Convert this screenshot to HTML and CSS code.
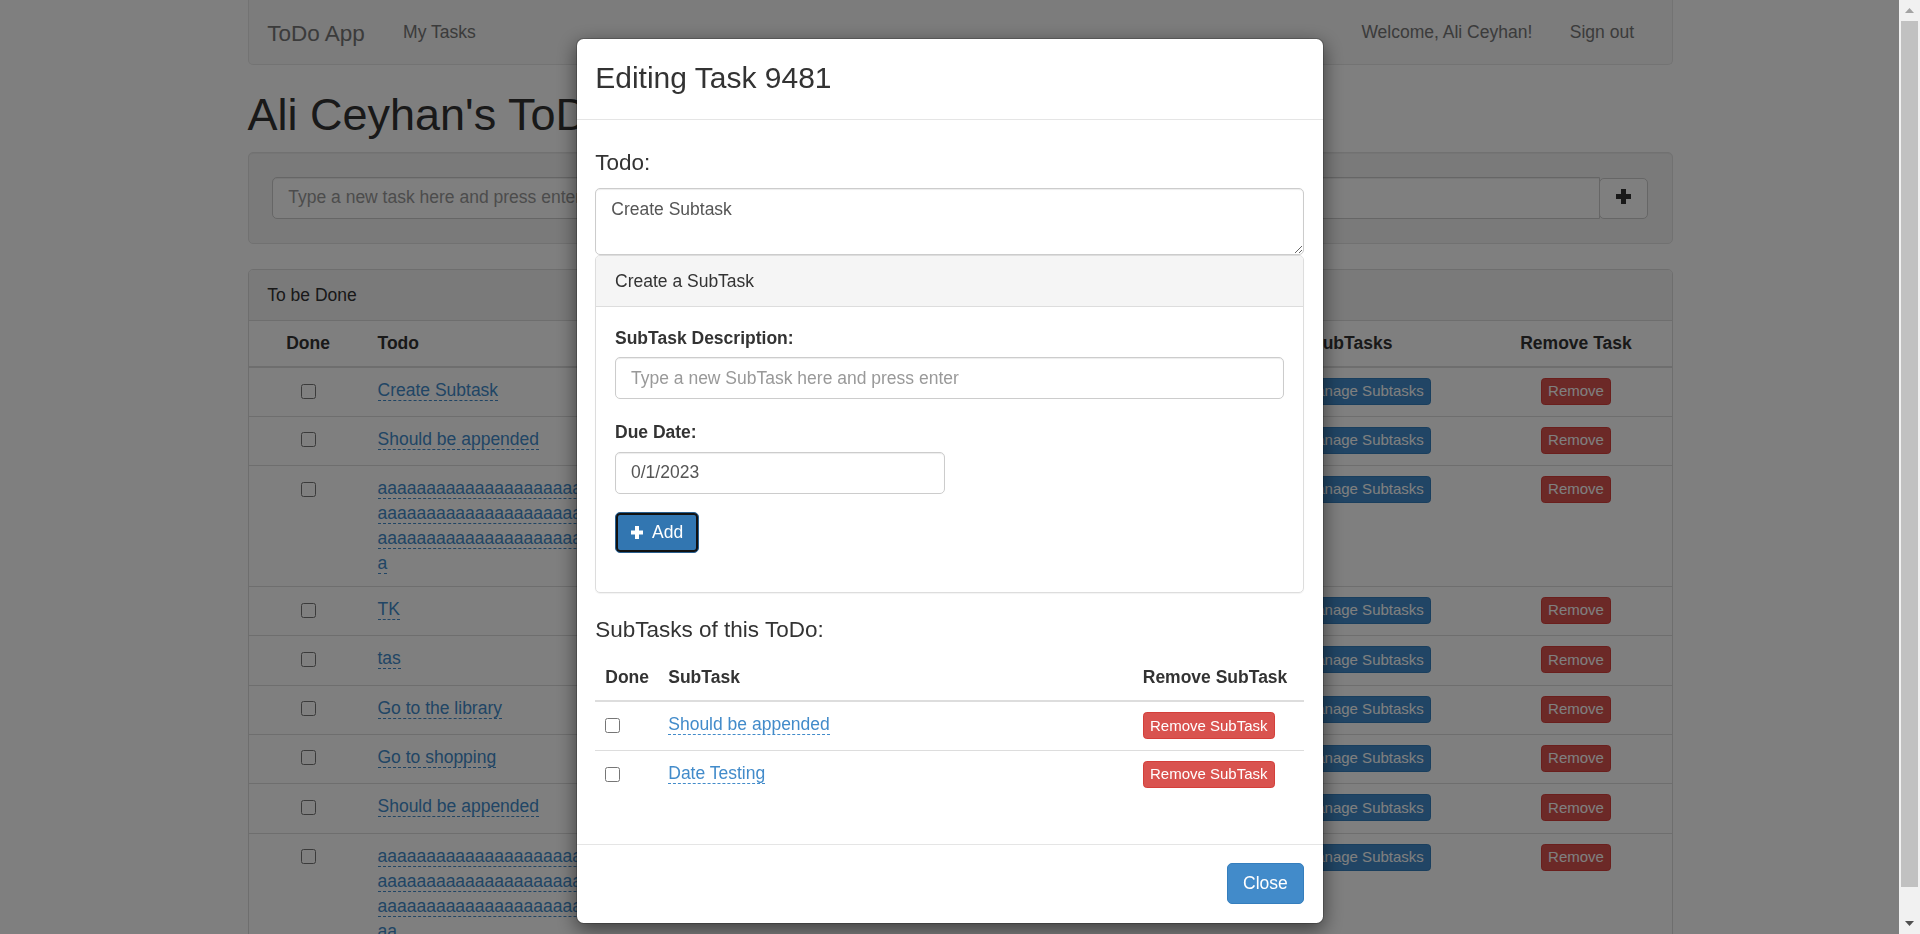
FILE: index.html
```html
<!DOCTYPE html>
<html lang="en">
<head>
<meta charset="utf-8">
<title>ToDo App</title>
<link rel="stylesheet" href="styles.css">
</head>
<body>
<div class="page">
  <nav class="navbar">
    <a class="navbar-brand">ToDo App</a>
    <ul class="nav">
      <li><a>My Tasks</a></li>
    </ul>
    <ul class="nav nav-right">
      <li><a>Welcome, Ali Ceyhan!</a></li>
      <li><a>Sign out</a></li>
    </ul>
  </nav>

  <h1 class="page-title">Ali Ceyhan's ToDo List</h1>

  <div class="well">
    <div class="input-group">
      <input class="form-control" type="text" placeholder="Type a new task here and press enter">
      <button class="btn btn-default btn-newtask" type="button">
        <svg class="icon-plus-lg" width="15" height="15" viewBox="0 0 15 15"><path d="M5 0h5v5h5v5h-5v5H5v-5H0V5h5z" fill="#333"/></svg>
      </button>
    </div>
  </div>

  <div class="panel">
    <div class="panel-heading">To be Done</div>
    <table class="task-table">
      <colgroup>
        <col class="col-done"><col class="col-todo"><col><col class="col-sub"><col class="col-remove">
      </colgroup>
      <thead>
        <tr><th class="center">Done</th><th>Todo</th><th>Due Date</th><th class="th-sub">SubTasks</th><th class="center">Remove Task</th></tr>
      </thead>
      <tbody>
        <tr><td class="center"><input type="checkbox" class="chk"></td><td><a class="editable">Create Subtask</a></td><td></td><td><button class="btn btn-xs btn-primary">Manage Subtasks</button></td><td class="center"><button class="btn btn-xs btn-danger">Remove</button></td></tr>
        <tr><td class="center"><input type="checkbox" class="chk"></td><td><a class="editable">Should be appended</a></td><td></td><td><button class="btn btn-xs btn-primary">Manage Subtasks</button></td><td class="center"><button class="btn btn-xs btn-danger">Remove</button></td></tr>
        <tr><td class="center"><input type="checkbox" class="chk"></td><td class="wrap"><a class="editable">aaaaaaaaaaaaaaaaaaaaaaaaaaaaaaaaaaaaaaaaaaaaaaaaaaaaaaaaaaaaaaaaaaaaaaaaaaaaaaaaaaaaaaaaaaaaaaaaaaaaaaaaaaaaaaaaaaaaaaaaa</a></td><td></td><td><button class="btn btn-xs btn-primary">Manage Subtasks</button></td><td class="center"><button class="btn btn-xs btn-danger">Remove</button></td></tr>
        <tr><td class="center"><input type="checkbox" class="chk"></td><td><a class="editable">TK</a></td><td></td><td><button class="btn btn-xs btn-primary">Manage Subtasks</button></td><td class="center"><button class="btn btn-xs btn-danger">Remove</button></td></tr>
        <tr><td class="center"><input type="checkbox" class="chk"></td><td><a class="editable">tas</a></td><td></td><td><button class="btn btn-xs btn-primary">Manage Subtasks</button></td><td class="center"><button class="btn btn-xs btn-danger">Remove</button></td></tr>
        <tr><td class="center"><input type="checkbox" class="chk"></td><td><a class="editable">Go to the library</a></td><td></td><td><button class="btn btn-xs btn-primary">Manage Subtasks</button></td><td class="center"><button class="btn btn-xs btn-danger">Remove</button></td></tr>
        <tr><td class="center"><input type="checkbox" class="chk"></td><td><a class="editable">Go to shopping</a></td><td></td><td><button class="btn btn-xs btn-primary">Manage Subtasks</button></td><td class="center"><button class="btn btn-xs btn-danger">Remove</button></td></tr>
        <tr><td class="center"><input type="checkbox" class="chk"></td><td><a class="editable">Should be appended</a></td><td></td><td><button class="btn btn-xs btn-primary">Manage Subtasks</button></td><td class="center"><button class="btn btn-xs btn-danger">Remove</button></td></tr>
        <tr><td class="center"><input type="checkbox" class="chk"></td><td class="wrap"><a class="editable">aaaaaaaaaaaaaaaaaaaaaaaaaaaaaaaaaaaaaaaaaaaaaaaaaaaaaaaaaaaaaaaaaaaaaaaaaaaaaaaaaaaaaaaaaaaaaaaaaaaaaaaaaaaaaaaaaaaaaaaaaa</a></td><td></td><td><button class="btn btn-xs btn-primary">Manage Subtasks</button></td><td class="center"><button class="btn btn-xs btn-danger">Remove</button></td></tr>
      </tbody>
    </table>
  </div>
</div>

<div class="backdrop"></div>

<div class="modal-layer">
  <div class="modal-area">
    <div class="modal-dialog">
      <div class="modal-content">
        <div class="modal-header">
          <h3 class="modal-title">Editing Task 9481</h3>
        </div>
        <div class="modal-body">
          <h4 class="section-title">Todo:</h4>
          <textarea class="form-control todo-text" rows="2">Create Subtask</textarea>
          <div class="sub-panel">
            <div class="sub-panel-heading">Create a SubTask</div>
            <div class="sub-panel-body">
              <div class="form-group form-group-first">
                <label class="field-label">SubTask Description:</label>
                <input class="form-control" type="text" placeholder="Type a new SubTask here and press enter">
              </div>
              <div class="form-group">
                <label class="field-label">Due Date:</label>
                <input class="form-control date-input" type="text" value="0/1/2023">
              </div>
              <div class="form-group">
                <button class="btn btn-add" type="button"><svg class="icon-plus" width="12" height="13" viewBox="0 0 12 13"><path d="M4 0h4v4.5h4v4H8V13H4V8.5H0v-4h4z" fill="#fff"/></svg><span>Add</span></button>
              </div>
            </div>
          </div>
          <h4 class="section-title">SubTasks of this ToDo:</h4>
          <table class="sub-table">
            <colgroup><col class="sc-done"><col><col class="sc-remove"></colgroup>
            <thead>
              <tr><th>Done</th><th>SubTask</th><th>Remove SubTask</th></tr>
            </thead>
            <tbody>
              <tr><td><input type="checkbox" class="chk"></td><td><a class="editable">Should be appended</a></td><td><button class="btn btn-xs btn-danger">Remove SubTask</button></td></tr>
              <tr><td><input type="checkbox" class="chk"></td><td><a class="editable">Date Testing</a></td><td><button class="btn btn-xs btn-danger">Remove SubTask</button></td></tr>
            </tbody>
          </table>
        </div>
        <div class="modal-footer">
          <button class="btn btn-close" type="button">Close</button>
        </div>
      </div>
    </div>
  </div>
  <div class="scrollbar">
    <div class="sb-arrow"><svg width="9" height="5" viewBox="0 0 9 5"><path d="M0 5L4.5 0 9 5z" fill="#a3a3a3"/></svg></div>
    <div class="sb-thumb"></div>
    <div class="sb-track"></div>
    <div class="sb-arrow"><svg width="9" height="5" viewBox="0 0 9 5"><path d="M0 0h9L4.5 5z" fill="#505050"/></svg></div>
  </div>
</div>
</body>
</html>
```

FILE: styles.css
```css
* { box-sizing: border-box; }

html, body {
  margin: 0;
  height: 934px;
  overflow: hidden;
}

body {
  font-family: "Liberation Sans", Arial, Helvetica, sans-serif;
  font-size: 17.5px;
  line-height: 25px;
  color: #333;
  background: #fff;
}

a { color: #428bca; text-decoration: none; }

.page {
  width: 1425px;
  margin: 0 auto;
}

/* navbar */
.navbar {
  display: flex;
  align-items: center;
  height: 65px;
  background: #f8f8f8;
  border: 1px solid #e7e7e7;
  border-top-width: 0;
  border-radius: 0 0 5px 5px;
}
.navbar-brand {
  color: #777;
  font-size: 22.5px;
  line-height: 25px;
  padding: 0 19.5px 0 18.75px;
  margin-top: 2px;
}
.nav {
  list-style: none;
  margin: 0;
  padding: 0;
  display: flex;
}
.nav a {
  color: #777;
  display: block;
  padding: 0 18.75px;
}
.nav-right {
  margin-left: auto;
  margin-right: 18.75px;
}

.page-title {
  font-size: 45px;
  font-weight: 500;
  line-height: 49.5px;
  margin: 25px 0 12.5px;
  color: #333;
}

/* well */
.well {
  background: #f5f5f5;
  border: 1px solid #e3e3e3;
  border-radius: 5px;
  padding: 23.75px;
  margin-bottom: 25px;
  box-shadow: inset 0 1px 1px rgba(0,0,0,.05);
}
.input-group {
  display: flex;
  align-items: flex-start;
}
.input-group .form-control {
  flex: 1;
  border-radius: 5px 0 0 5px;
}
.btn-newtask {
  width: 48.5px;
  height: 41px;
  margin-top: 1.5px;
  border-radius: 0 5px 5px 0;
  margin-left: -1px;
  display: flex;
  align-items: center;
  justify-content: center;
  padding: 0;
}

.form-control {
  display: block;
  width: 100%;
  height: 42px;
  padding: 7.5px 15px;
  font-family: inherit;
  font-size: 17.5px;
  line-height: 25px;
  color: #555;
  background: #fff;
  border: 1px solid #ccc;
  border-radius: 5px;
  box-shadow: inset 0 1px 1px rgba(0,0,0,.075);
  outline: none;
}
.form-control::placeholder { color: #999; opacity: 1; }

/* buttons */
.btn {
  display: inline-block;
  font-family: inherit;
  font-size: 17.5px;
  line-height: 25px;
  padding: 7px 15px;
  border: 1px solid transparent;
  border-radius: 5px;
  cursor: pointer;
  text-align: center;
  white-space: nowrap;
}
.btn-default { background: #fff; border-color: #ccc; color: #333; }
.btn-primary { background: #428bca; border-color: #357ebd; color: #fff; }
.btn-danger { background: #d9534f; border-color: #d43f3a; color: #fff; }
.btn-xs {
  font-size: 15px;
  line-height: 22.5px;
  padding: 1.25px 6.25px;
  border-radius: 3.75px;
}

/* main panel */
.panel {
  border: 1px solid #ddd;
  border-radius: 5px;
  background: #fff;
}
.panel-heading {
  padding: 12.5px 18.75px;
  background: #f5f5f5;
  border-bottom: 1px solid #ddd;
  border-radius: 4px 4px 0 0;
}

.task-table {
  width: 100%;
  table-layout: fixed;
  border-collapse: collapse;
}
.col-done { width: 119px; }
.col-todo { width: 415px; }
.col-sub { width: 194px; }
.col-remove { width: 191px; }
.task-table th,
.sub-table th {
  padding: 10px;
  text-align: left;
  font-weight: bold;
  vertical-align: bottom;
  border-bottom: 2.5px solid #ddd;
}
.task-table td,
.sub-table td {
  padding: 10px;
  vertical-align: top;
  border-top: 1px solid #ddd;
  height: 49.3px;
}
.task-table .center { text-align: center; }
.task-table .th-sub { padding-left: 24.5px; }
.wrap { word-break: break-all; }

.chk {
  width: 15px;
  height: 15px;
  margin: 5.5px 0 0;
  vertical-align: top;
}

.editable {
  color: #428bca;
  border-bottom: 1px dashed #428bca;
}

/* backdrop + modal */
.backdrop {
  position: fixed;
  inset: 0;
  background: rgba(0,0,0,.5);
}
.modal-layer {
  position: fixed;
  inset: 0;
  display: flex;
}
.modal-area {
  flex: 1;
}
.modal-dialog {
  width: 748px;
  margin: 37.5px auto 0;
}
.modal-content {
  background: #fff;
  background-clip: padding-box;
  border: 1px solid rgba(0,0,0,.2);
  border-radius: 7.5px;
  box-shadow: 0 6px 19px rgba(0,0,0,.5);
}
.modal-header {
  padding: 18.75px;
  border-bottom: 1px solid #e5e5e5;
}
.modal-title {
  margin: 0;
  font-size: 30px;
  font-weight: 500;
  line-height: 42.86px;
}
.modal-body {
  padding: 18.75px;
}
.section-title {
  font-size: 22.5px;
  font-weight: 500;
  line-height: 24.75px;
  margin: 12.5px 0;
}
.todo-text {
  height: 67px;
  resize: vertical;
  color: #555;
}
.sub-panel {
  border: 1px solid #ddd;
  border-radius: 5px;
  margin-bottom: 25px;
  box-shadow: 0 1px 1px rgba(0,0,0,.05);
}
.sub-panel-heading {
  padding: 12.5px 18.75px;
  background: #f5f5f5;
  border-bottom: 1px solid #ddd;
  border-radius: 4px 4px 0 0;
}
.sub-panel-body {
  padding: 18.75px 18.75px 20px;
}
.form-group { margin-bottom: 18.75px; }
.form-group-first { margin-bottom: 21px; }
.field-label {
  display: block;
  font-weight: bold;
  margin-bottom: 6.25px;
}
.date-input { width: 330px; }

.btn-add {
  background: #3276b1;
  color: #fff;
  border: 1px solid #285e8e;
  box-shadow: inset 0 0 0 2px #111;
  height: 41px;
  padding: 6.5px 15px;
  display: inline-flex;
  align-items: center;
  gap: 9px;
}
.icon-plus { margin-bottom: 1px; }

.sub-table {
  width: 100%;
  table-layout: fixed;
  border-collapse: collapse;
  margin-bottom: 25px;
}
.sc-done { width: 63px; }
.sc-remove { width: 171px; }
.sub-table .chk { margin-top: 6px; }

.modal-footer {
  padding: 18.75px;
  text-align: right;
  border-top: 1px solid #e5e5e5;
}
.btn-close {
  background: #428bca;
  border-color: #357ebd;
  color: #fff;
  padding: 7px 15px;
}

/* scrollbar */
.scrollbar {
  width: 21px;
  background: #f1f1f1;
  display: flex;
  flex-direction: column;
}
.sb-arrow {
  height: 21px;
  display: flex;
  align-items: center;
  justify-content: center;
}
.sb-thumb {
  height: 866px;
  margin: 0 2px;
  background: #c1c1c1;
}
.sb-track { flex: 1; }
```
